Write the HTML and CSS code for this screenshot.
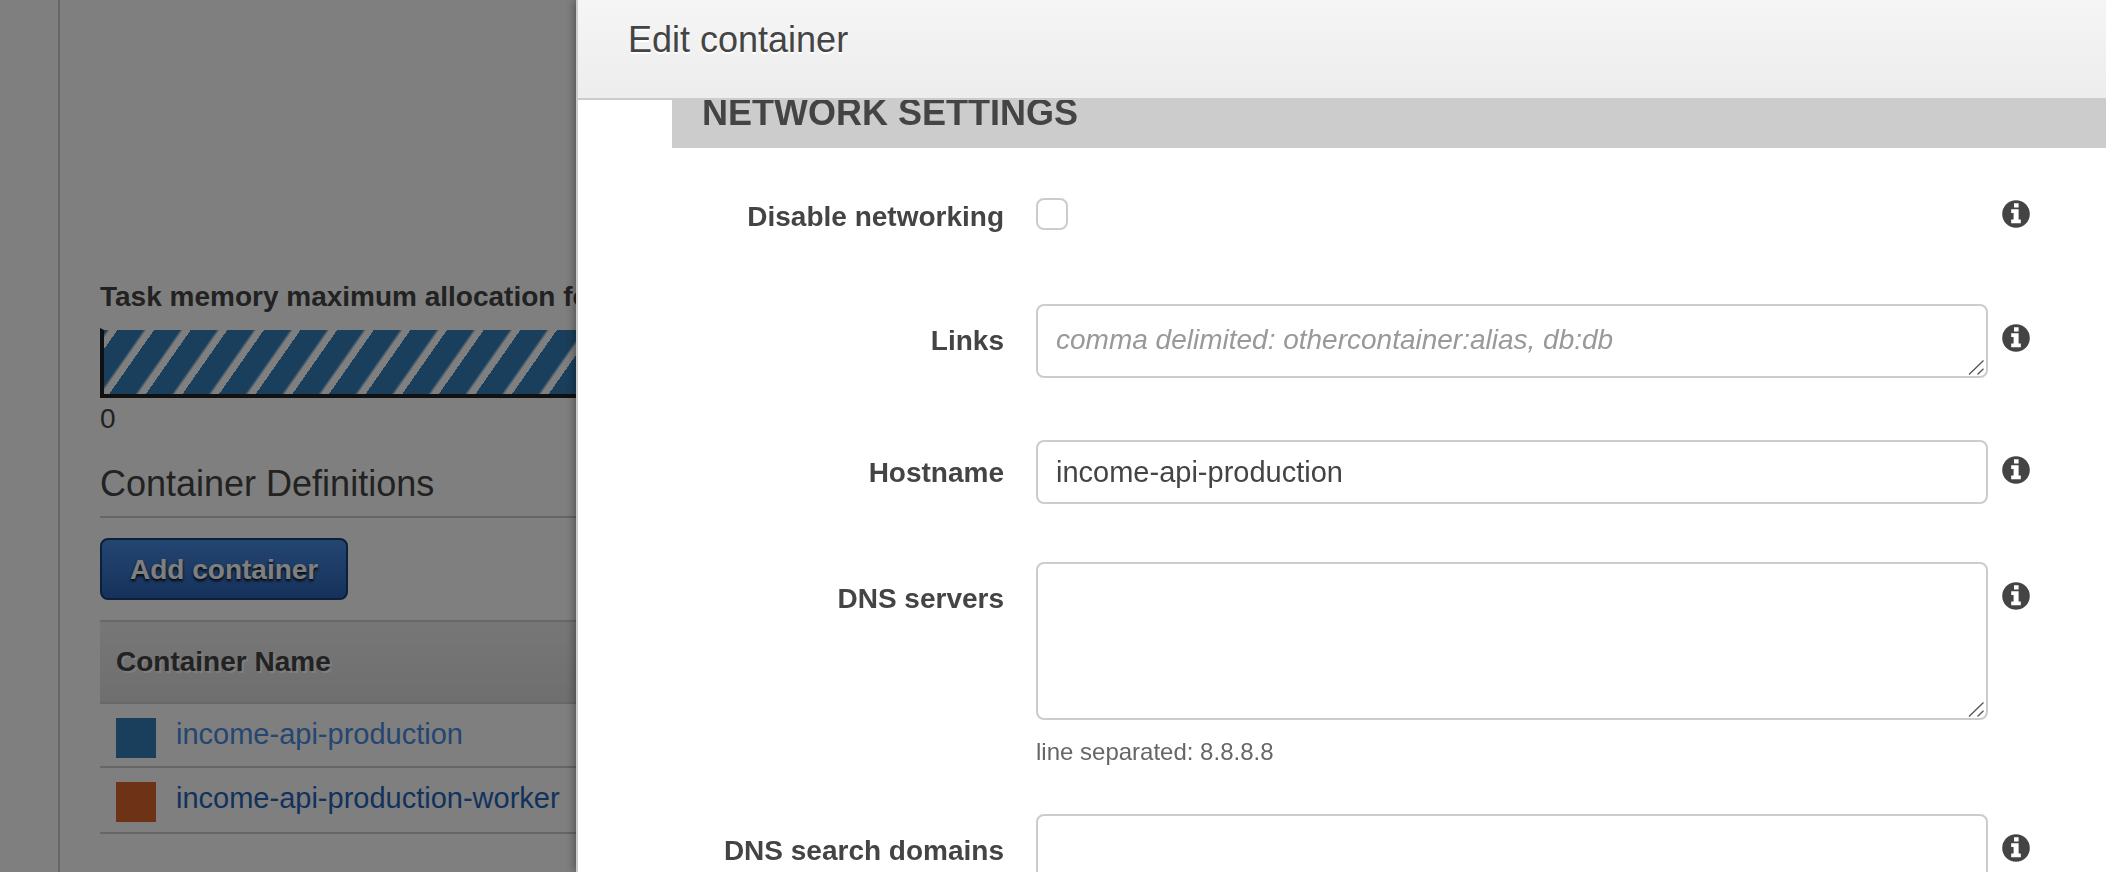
FILE: index.html
```html
<!DOCTYPE html>
<html lang="en">
<head>
<meta charset="utf-8">
<title>Edit container</title>
<link rel="stylesheet" href="styles.css">
</head>
<body>
<svg class="sprite" aria-hidden="true">
  <symbol id="info" viewBox="0 0 28 28">
    <circle cx="14" cy="14" r="13.8" fill="#444"/>
    <path fill="#fff" d="M12 3.2h4.6v4.2H12zM9.2 9.2h7.4v10.2h2.2v3.8H9.2v-3.8h2.4v-6.3H9.2z"/>
  </symbol>
  <symbol id="grip" viewBox="0 0 16 16">
    <path fill="none" stroke="#555" stroke-width="1.3" d="M1 15.5 15.5 1.5M9.5 15.5l6-5.8"/>
  </symbol>
</svg>

<main class="page">
  <section class="task">
    <h3 class="memory-title">Task memory maximum allocation for containers</h3>
    <div class="memory-bar"></div>
    <p class="memory-min">0</p>
    <h2 class="section-title">Container Definitions</h2>
    <button class="add-button" type="button">Add container</button>
    <table class="containers">
      <thead>
        <tr><th scope="col">Container Name</th></tr>
      </thead>
      <tbody>
        <tr><td><div class="container-cell"><span class="swatch swatch-blue"></span><a class="container-link active" href="#api">income-api-production</a></div></td></tr>
        <tr><td><div class="container-cell"><span class="swatch swatch-orange"></span><a class="container-link" href="#worker">income-api-production-worker</a></div></td></tr>
      </tbody>
    </table>
  </section>
</main>

<div class="backdrop"></div>

<div class="dialog" role="dialog" aria-labelledby="dialog-title">
  <header class="dialog-header"><h1 class="dialog-title" id="dialog-title">Edit container</h1></header>
  <div class="dialog-body">
    <h2 class="group-title">NETWORK SETTINGS</h2>
    <form class="settings">
      <div class="row row-check">
        <label class="label" for="disable">Disable networking</label>
        <div class="field"><input class="check" type="checkbox" id="disable"></div>
        <button class="info" type="button" aria-label="About disable networking"><svg><use href="#info"/></svg></button>
      </div>
      <div class="row row-area">
        <label class="label" for="links">Links</label>
        <div class="field">
          <div class="area-wrap"><textarea class="control area-short" id="links" placeholder="comma delimited: othercontainer:alias, db:db"></textarea><svg class="grip"><use href="#grip"/></svg></div>
        </div>
        <button class="info" type="button" aria-label="About links"><svg><use href="#info"/></svg></button>
      </div>
      <div class="row row-input">
        <label class="label" for="hostname">Hostname</label>
        <div class="field"><input class="control line" type="text" id="hostname" value="income-api-production"></div>
        <button class="info" type="button" aria-label="About hostname"><svg><use href="#info"/></svg></button>
      </div>
      <div class="row">
        <label class="label" for="dns">DNS servers</label>
        <div class="field">
          <div class="area-wrap"><textarea class="control area-tall" id="dns" aria-describedby="dns-hint"></textarea><svg class="grip"><use href="#grip"/></svg></div>
          <p class="hint" id="dns-hint">line separated: 8.8.8.8</p>
        </div>
        <button class="info" type="button" aria-label="About DNS servers"><svg><use href="#info"/></svg></button>
      </div>
      <div class="row">
        <label class="label" for="search">DNS search domains</label>
        <div class="field">
          <div class="area-wrap"><textarea class="control area-tall" id="search"></textarea><svg class="grip"><use href="#grip"/></svg></div>
        </div>
        <button class="info" type="button" aria-label="About DNS search domains"><svg><use href="#info"/></svg></button>
      </div>
    </form>
  </div>
</div>
</body>
</html>
```
FILE: styles.css
```css
* {
  box-sizing: border-box;
}

html,
body {
  height: 100%;
  margin: 0;
  overflow: hidden;
}

body {
  color: #444;
  background: #fff;
  font: 29px/40px "Helvetica Neue", "Liberation Sans", Arial, sans-serif;
}

h1, h2, h3, p {
  margin: 0;
}

.sprite {
  position: absolute;
  width: 0;
  height: 0;
}

/* Page under the dialog */
.page {
  height: 100%;
  margin-left: 58px;
  padding: 276px 0 0 40px;
  border-left: 2px solid #ccc;
}

.memory-title {
  margin-bottom: 10px;
  font-size: 28px;
  line-height: 42px;
  white-space: nowrap;
}

.memory-bar {
  height: 70px;
  border: solid #222;
  border-width: 2px 0 4px 4px;
  border-top-color: transparent;
  background: repeating-linear-gradient(125deg, #347eb8 0, #347eb8 2px, #fff 5px, #fff 11px, #347eb8 11px, #347eb8 30px) padding-box;
}

.memory-min {
  height: 64px;
  font-size: 28px;
  line-height: 42px;
}

.section-title {
  padding-bottom: 10px;
  margin-bottom: 20px;
  border-bottom: 2px solid #ccc;
  font-size: 36px;
  font-weight: 400;
  line-height: 44px;
}

.add-button {
  display: block;
  height: 62px;
  margin-bottom: 20px;
  padding: 2px 28px 0;
  border: 2px solid #184079;
  border-radius: 8px;
  color: #fff;
  background: linear-gradient(#488ce2, #2c64b8);
  font: bold 28px/40px "Helvetica Neue", "Liberation Sans", Arial, sans-serif;
  text-shadow: 0 2px 3px #000;
}

.containers {
  width: 100%;
  border-spacing: 0;
}

.containers th {
  height: 84px;
  padding: 0 16px;
  border: solid #d0d0d0;
  border-width: 2px 0;
  background: linear-gradient(#eee, #dedede);
  font-size: 28px;
  text-align: left;
  text-shadow: 2px 2px 0 #fff;
}

.containers td {
  padding: 10px 16px 8px;
  border-bottom: 2px solid #ccc;
}

.containers tr:last-child td {
  padding-bottom: 10px;
}

.container-cell {
  display: flex;
  gap: 20px;
  height: 44px;
}

.swatch {
  width: 40px;
  height: 40px;
  margin-top: 4px;
}

.swatch-blue {
  background: #347eb8;
}

.swatch-orange {
  background: #dc662e;
}

.container-link {
  color: #2464b8;
  text-decoration: none;
}

.container-link.active {
  color: #488ce2;
}

.backdrop {
  position: fixed;
  inset: 0;
  background: rgba(0, 0, 0, 0.5);
}

/* Dialog */
.dialog {
  position: fixed;
  inset: 0 0 0 576px;
  display: flex;
  flex-direction: column;
  border-left: 2px solid #ccc;
  background: #fff;
  box-shadow: 0 0 10px rgba(0, 0, 0, 0.5);
}

.dialog-header {
  padding: 18px 50px 36px;
  border-bottom: 2px solid #ccc;
  background: linear-gradient(#f5f5f5, #ededed);
}

.dialog-title {
  font-size: 36px;
  font-weight: 400;
  line-height: 44px;
  text-shadow: 0 2px 0 #fff;
}

.dialog-body {
  flex: 1;
  min-height: 0;
  padding-left: 94px;
  overflow: hidden;
}

.group-title {
  padding: 0 30px 22px;
  background: #ccc;
  font-size: 36px;
  line-height: 26px;
}

.settings {
  display: flex;
  flex-direction: column;
  gap: 40px;
  padding: 48px 76px 48px 0;
}

.row {
  display: grid;
  grid-template-columns: 332px 1fr 28px;
  align-items: start;
}

.field {
  margin: 0 14px 0 32px;
}

.label {
  padding-top: 16px;
  font-size: 28px;
  font-weight: 700;
  line-height: 42px;
  text-align: right;
}

.info {
  height: 28px;
  margin-top: 20px;
  padding: 0;
  border: 0;
  background: none;
}

.info svg {
  display: block;
  width: 28px;
  height: 28px;
}

.row-check {
  min-height: 68px;
}

.row-check .label {
  padding-top: 0;
}

.row-check .info {
  margin-top: 4px;
}

.row-input .label {
  padding-top: 12px;
}

.row-input .info {
  margin-top: 16px;
}

.row-area {
  padding-bottom: 22px;
}

.row-input {
  padding-bottom: 18px;
}

.check {
  appearance: none;
  display: block;
  width: 32px;
  height: 32px;
  margin: 2px 0 0;
  border: 2px solid #ccc;
  border-radius: 8px;
  background: #fff;
}

.control {
  display: block;
  width: 100%;
  border: 2px solid #ccc;
  border-radius: 8px;
  color: #444;
  background: #fff;
  font: 29px/40px "Helvetica Neue", "Liberation Sans", Arial, sans-serif;
  resize: none;
  outline: none;
}

.control::placeholder {
  color: #999;
  font-size: 28px;
  font-style: italic;
}

.line {
  height: 64px;
  padding: 0 18px;
}

.area-wrap {
  position: relative;
}

.area-short {
  height: 74px;
  padding: 14px 18px;
  overflow: hidden;
}

.area-tall {
  height: 158px;
  padding: 14px 18px;
}

.grip {
  position: absolute;
  right: 4px;
  bottom: 3px;
  width: 16px;
  height: 16px;
}

.hint {
  margin: 12px 0 2px;
  color: #666;
  font-size: 24px;
}
```
